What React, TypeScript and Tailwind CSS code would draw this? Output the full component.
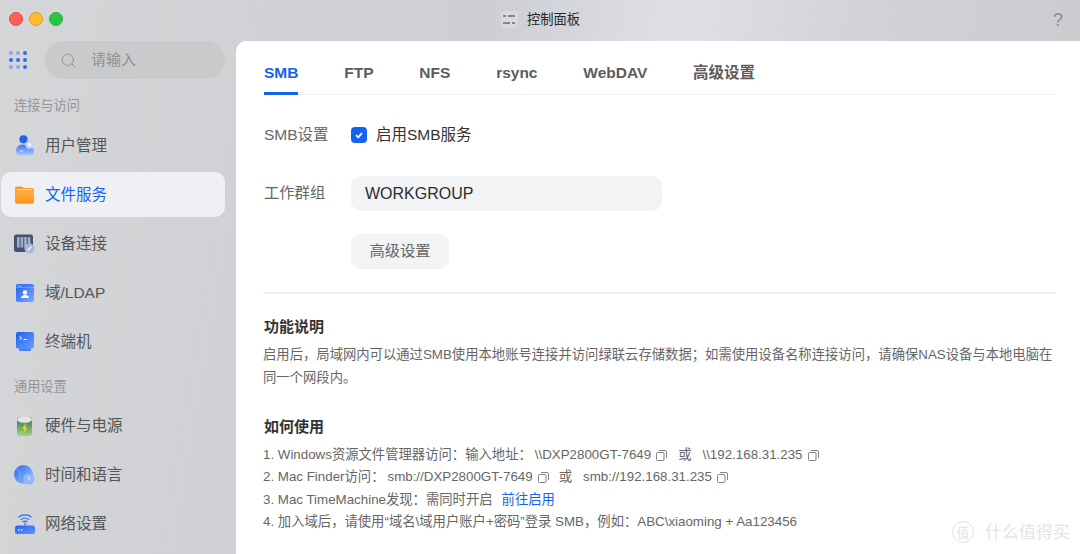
import { Search } from "lucide-react";
import type { ReactNode } from "react";

const font = "font-['Liberation_Sans','Noto_Sans_CJK_SC',sans-serif]";

function UserIcon() {
  return (
    <svg width="20" height="21" viewBox="0 0 20 21">
      <defs>
        <linearGradient id="u1" x1="0" y1="0" x2="0" y2="1">
          <stop offset="0" stopColor="#3f77f2" />
          <stop offset="1" stopColor="#a9cafc" />
        </linearGradient>
      </defs>
      <circle cx="8.5" cy="4.3" r="4.1" fill="#2a5fee" />
      <path d="M1 16c0-3.5 3-6.5 6.5-6.5 3 0 4.5 1.5 7 2.5 2.5 1 4.5 1.5 4.5 4.5 0 2.5-2 4-4.5 4H5c-2.5 0-4-2-4-4.5z" fill="url(#u1)" />
      <circle cx="14.5" cy="9.7" r="4" fill="#bcd3fb" />
      <circle cx="14.5" cy="9.7" r="1.9" fill="#f0f6ff" />
      <path d="M5 15.5l1.500 1 1.500-1" stroke="#e4eeff" strokeWidth="1" fill="none" />
    </svg>
  );
}

function FolderIcon() {
  return (
    <svg width="19" height="18" viewBox="0 0 19 18">
      <defs>
        <linearGradient id="f1" x1="0" y1="0" x2="0" y2="1">
          <stop offset="0" stopColor="#ffb040" />
          <stop offset="1" stopColor="#ff961f" />
        </linearGradient>
      </defs>
      <path d="M0 2.5A2 2 0 012 .5h5L8.500 2H17a2 2 0 012 2v11.5a2 2 0 01-2 2H2a2 2 0 01-2-2z" fill="#f59a23" />
      <rect x="1.5" y="3" width="16" height="1.2" fill="#fde3b8" />
      <rect x="0" y="4.5" width="19" height="13" rx="2" fill="url(#f1)" />
    </svg>
  );
}

function DeviceIcon() {
  return (
    <svg width="21" height="20" viewBox="0 0 21 20">
      <rect x="0" y="0.5" width="19" height="17.5" rx="2" fill="#475372" />
      <rect x="3" y="3" width="2.6" height="10.5" fill="#a3adc6" />
      <rect x="6.6" y="3" width="2.6" height="10.5" fill="#a3adc6" />
      <rect x="10.2" y="3" width="2.6" height="10.5" fill="#a3adc6" />
      <rect x="13.8" y="3" width="2.6" height="10.5" fill="#a3adc6" />
      <circle cx="15.5" cy="14.5" r="5" fill="#a7b6d9" />
      <path d="M13.5 16.500l4-4" stroke="#eef2fb" strokeWidth="1.6" />
    </svg>
  );
}

function DomainIcon() {
  return (
    <svg width="18" height="18" viewBox="0 0 18 18">
      <defs>
        <linearGradient id="d1" x1="0" y1="0" x2="1" y2="1">
          <stop offset="0" stopColor="#2160f3" />
          <stop offset="1" stopColor="#7ba8fb" />
        </linearGradient>
      </defs>
      <rect width="18" height="18" rx="2" fill="url(#d1)" />
      <rect x="0" y="3.5" width="18" height="0.5" fill="#9fc0ff" />
      <rect x="1.5" y="1.5" width="4" height="1" fill="#9fc0ff" />
      <circle cx="9" cy="8.5" r="2.2" fill="#fff" />
      <path d="M5 14c0-2 2-3 4-3s4 1 4 3z" fill="#fff" />
    </svg>
  );
}

function TerminalIcon() {
  return (
    <svg width="18" height="19" viewBox="0 0 18 19">
      <defs>
        <linearGradient id="t1" x1="0" y1="0" x2="1" y2="1">
          <stop offset="0" stopColor="#1f5ef3" />
          <stop offset="1" stopColor="#6f9ffb" />
        </linearGradient>
      </defs>
      <rect x="3" y="16" width="12" height="3" rx="1" fill="#4a80f5" />
      <rect width="18" height="16.5" rx="2" fill="url(#t1)" />
      <path d="M3.5 4.500l2.200 1.600-2.200 1.600" stroke="#fff" strokeWidth="1" fill="none" />
      <path d="M7.5 7.500h3.500" stroke="#fff" strokeWidth="1" />
    </svg>
  );
}

function BatteryIcon() {
  return (
    <svg width="16" height="20" viewBox="0 0 16 20">
      <defs>
        <linearGradient id="b1" x1="0" y1="0" x2="0" y2="1">
          <stop offset="0" stopColor="#2f6f58" />
          <stop offset="1" stopColor="#a3d47e" />
        </linearGradient>
      </defs>
      <rect y="1" width="15" height="19" rx="3" fill="url(#b1)" />
      <ellipse cx="7.5" cy="3.5" rx="7.5" ry="3.2" fill="#e3e6e4" stroke="#c3c9c6" strokeWidth="0.5" />
      <path d="M9 7l-4 5.500h2.500L6.500 17l4-5.500H8z" fill="#f7d92e" />
    </svg>
  );
}

function GlobeIcon() {
  return (
    <svg width="21" height="20" viewBox="0 0 21 20">
      <defs>
        <linearGradient id="g1" x1="0" y1="0" x2="1" y2="1">
          <stop offset="0" stopColor="#2d68f2" />
          <stop offset="1" stopColor="#a4c6fb" />
        </linearGradient>
      </defs>
      <circle cx="9.5" cy="9.5" r="9.5" fill="url(#g1)" />
      <path d="M2 4c3 1 5 4 4 8s-2 5-2 5" stroke="#7ea8f8" strokeWidth="1" fill="none" />
      <circle cx="15" cy="14" r="5.5" fill="#8fb8fa" />
      <path d="M15 11.500V14l1.500 1" stroke="#fff" strokeWidth="0.9" fill="none" />
    </svg>
  );
}

function WifiIcon() {
  return (
    <svg width="20" height="20" viewBox="0 0 20 20">
      <defs>
        <linearGradient id="w1" x1="0" y1="0" x2="1" y2="1">
          <stop offset="0" stopColor="#2563f2" />
          <stop offset="1" stopColor="#5f94f8" />
        </linearGradient>
      </defs>
      <path d="M3.5 3.200c3.600-3 9.400-3 13 0" stroke="#2f6bf2" strokeWidth="1.3" fill="none" />
      <path d="M5.5 5.800c2.600-2 6.400-2 9 0" stroke="#4c86f6" strokeWidth="1.3" fill="none" />
      <path d="M7.6 8c1.400-1 3.400-1 4.800 0" stroke="#2f6bf2" strokeWidth="1.3" fill="none" />
      <path d="M9 8.500h2V12H9z" fill="#6d9bf7" />
      <rect y="11.5" width="20" height="8.5" rx="2" fill="url(#w1)" />
      <rect x="3" y="15" width="1.6" height="1.6" fill="#dbe8ff" />
      <rect x="6" y="15" width="1.6" height="1.6" fill="#dbe8ff" />
    </svg>
  );
}

function CopyIcon() {
  return (
    <svg width="11" height="11" viewBox="0 0 11 11" className="inline-block" fill="none" stroke="#777" strokeWidth="0.9">
      <rect x="0.5" y="2.5" width="7.5" height="8" rx="1" />
      <path d="M3 .5h6A1.500 1.500 0 0110.500 2v6" />
    </svg>
  );
}

function NavItem({ icon, label, active }: { icon: ReactNode; label: string; active?: boolean }) {
  return (
    <div
      className={`flex h-[45px] w-[224px] items-center rounded-[10px] ${
        active ? "bg-[#eff0f4] text-[#1463f0]" : "text-[#555657]"
      }`}
    >
      <span className="flex w-[44px] justify-center pl-[3px]">{icon}</span>
      <span className="text-[15.5px]">{label}</span>
    </div>
  );
}

const tabs = ["SMB", "FTP", "NFS", "rsync", "WebDAV", "高级设置"];

export default function App() {
  return (
    <div
      className={`${font} flex h-[554px] w-[1080px] flex-col overflow-hidden bg-[linear-gradient(100deg,#d4d6d8_0%,#cfd1d4_25%,#cdcfd3_42%,#e0dfe6_58%,#d0d2d6_75%,#c9cacc_100%)]`}
    >
      <header className="relative flex h-[41px] shrink-0 items-center justify-center">
        <div className="absolute left-[9px] top-[12px] flex gap-[6px]">
          <span className="size-[14px] rounded-full border border-[#e5484d] bg-[#fe5f57]" />
          <span className="size-[14px] rounded-full border border-[#e0a020] bg-[#febb2e]" />
          <span className="size-[14px] rounded-full border border-[#22b33a] bg-[#27c840]" />
        </div>
        <div className="ml-[1px] flex items-center gap-[9px] pb-[2px]">
          <span className="flex size-[17px] items-center justify-center rounded-[4px] bg-[#dadada]">
            <svg width="12" height="9" viewBox="0 0 12 9" stroke="#333" strokeWidth="1.2">
              <path d="M0 1h3M5 1h7M0 8h7M9 8h3" />
            </svg>
          </span>
          <span className="text-[13.3px] text-[#2a2a2a]">控制面板</span>
        </div>
        <span className="absolute right-[17px] top-[7px] text-[18px] text-[#8a8b8d]">?</span>
      </header>

      <div className="flex min-h-0 flex-1">
        <aside className="w-[236px] shrink-0 pl-[1px]">
          <div className="flex h-[38px] items-center">
            <svg width="18" height="18" viewBox="0 0 18 18" className="ml-[8px] shrink-0">
              {[2, 9, 16].map((y) =>
                [2, 9, 16].map((x) => (
                  <circle key={`${x}-${y}`} cx={x} cy={y} r="2" fill={y === 9 || x === 16 ? "#2f6bf2" : "#88a9f0"} />
                )),
              )}
            </svg>
            <div className="ml-[18px] flex h-[38px] w-[180px] items-center rounded-full bg-[#c8cacb] pl-[15px] text-[15px] text-[#8f9092]">
              <Search size={17} strokeWidth={1.2} className="text-[#8a8b8c]" />
              <span className="ml-[14px]">请输入</span>
            </div>
          </div>
          <div className="mb-[8px] mt-[18px] pl-[13px] text-[13.2px] leading-[18px] text-[#959698]">连接与访问</div>
          <div className="flex flex-col gap-[4px]">
            <NavItem icon={<UserIcon />} label="用户管理" />
            <NavItem icon={<FolderIcon />} label="文件服务" active />
            <NavItem icon={<DeviceIcon />} label="设备连接" />
            <NavItem icon={<DomainIcon />} label="域/LDAP" />
            <NavItem icon={<TerminalIcon />} label="终端机" />
          </div>
          <div className="mb-[7px] mt-[14px] pl-[13px] text-[13.2px] leading-[18px] text-[#959698]">通用设置</div>
          <div className="flex flex-col gap-[4px]">
            <NavItem icon={<BatteryIcon />} label="硬件与电源" />
            <NavItem icon={<GlobeIcon />} label="时间和语言" />
            <NavItem icon={<WifiIcon />} label="网络设置" />
          </div>
        </aside>

        <main className="relative flex-1 rounded-tl-[10px] bg-white pl-[27px] pr-[24px]">
          <nav className="flex h-[54px] gap-[45.8px] border-b border-[#f0f0f2] pl-[1px]">
            {tabs.map((tab, i) => (
              <div
                key={tab}
                className={`flex h-[54px] items-center border-b-[3px] pt-[12px] text-[15.5px] font-bold ${
                  i === 0 ? "border-[#1463f0] text-[#1463f0]" : "border-transparent text-[#5c5c5c]"
                }`}
              >
                {tab}
              </div>
            ))}
          </nav>

          <div className="mt-[27px] flex h-[26px] items-center">
            <span className="w-[88px] pl-[1px] text-[15.5px] text-[#666]">SMB设置</span>
            <span className="flex size-[16px] items-center justify-center rounded-[4px] bg-[#1463f0]">
              <svg width="10" height="10" viewBox="0 0 10 10" fill="none" stroke="#fff" strokeWidth="1.8">
                <path d="M2 5.200l2.200 2.200L8 3" />
              </svg>
            </span>
            <span className="ml-[9px] text-[15.5px] text-[#333]">启用SMB服务</span>
          </div>

          <div className="mt-[28px] flex items-center">
            <span className="w-[88px] pl-[1px] text-[15.3px] text-[#666]">工作群组</span>
            <div className="flex h-[35px] w-[311px] items-center rounded-[10px] bg-[#f2f3f5] pl-[14px] text-[16px] text-[#2c2c2c]">
              WORKGROUP
            </div>
          </div>

          <div className="ml-[88px] mt-[23px] flex h-[35px] w-[98px] items-center justify-center rounded-[10px] bg-[#f2f3f5] text-[15.3px] text-[#666]">
            高级设置
          </div>

          <div className="mt-[23px] h-[2px] bg-[#f0f0f3]" />

          <h2 className="mt-[22px] pl-[1px] text-[15px] font-bold leading-[22px] text-[#333]">功能说明</h2>
          <p className="mt-[5px] text-[13.33px] leading-[23px] text-[#666]">
            启用后，局域网内可以通过SMB使用本地账号连接并访问绿联云存储数据；如需使用设备名称连接访问，请确保NAS设备与本地电脑在同一个网段内。
          </p>

          <h2 className="mt-[27px] pl-[1px] text-[15px] font-bold leading-[22px] text-[#333]">如何使用</h2>
          <ol className="mt-[6px] text-[13.33px] leading-[22.4px] text-[#666]">
            <li className="flex items-center">
              1. Windows资源文件管理器访问：输入地址：<span className="ml-[3px]">\\DXP2800GT-7649</span>
              <span className="ml-[5px] flex"><CopyIcon /></span>
              <span className="ml-[11px]">或</span>
              <span className="ml-[11px]">\\192.168.31.235</span>
              <span className="ml-[5px] flex"><CopyIcon /></span>
            </li>
            <li className="flex items-center">
              2. Mac Finder访问：<span className="ml-[3px]">smb://DXP2800GT-7649</span>
              <span className="ml-[5px] flex"><CopyIcon /></span>
              <span className="ml-[10px]">或</span>
              <span className="ml-[11px]">smb://192.168.31.235</span>
              <span className="ml-[5px] flex"><CopyIcon /></span>
            </li>
            <li>
              3. Mac TimeMachine发现：需同时开启<span className="ml-[9px] text-[#1463f0]">前往启用</span>
            </li>
            <li>4. 加入域后，请使用“域名\域用户账户+密码”登录 SMB，例如：ABC\xiaoming + Aa123456</li>
          </ol>

          <div className="absolute bottom-[9px] right-[10px] flex items-center gap-[11px] text-[#e4e4e4]">
            <span className="flex size-[22px] items-center justify-center rounded-full border border-[#e4e4e4] text-[13px]">值</span>
            <span className="text-[17px]">什么值得买</span>
          </div>
        </main>
      </div>
    </div>
  );
}
